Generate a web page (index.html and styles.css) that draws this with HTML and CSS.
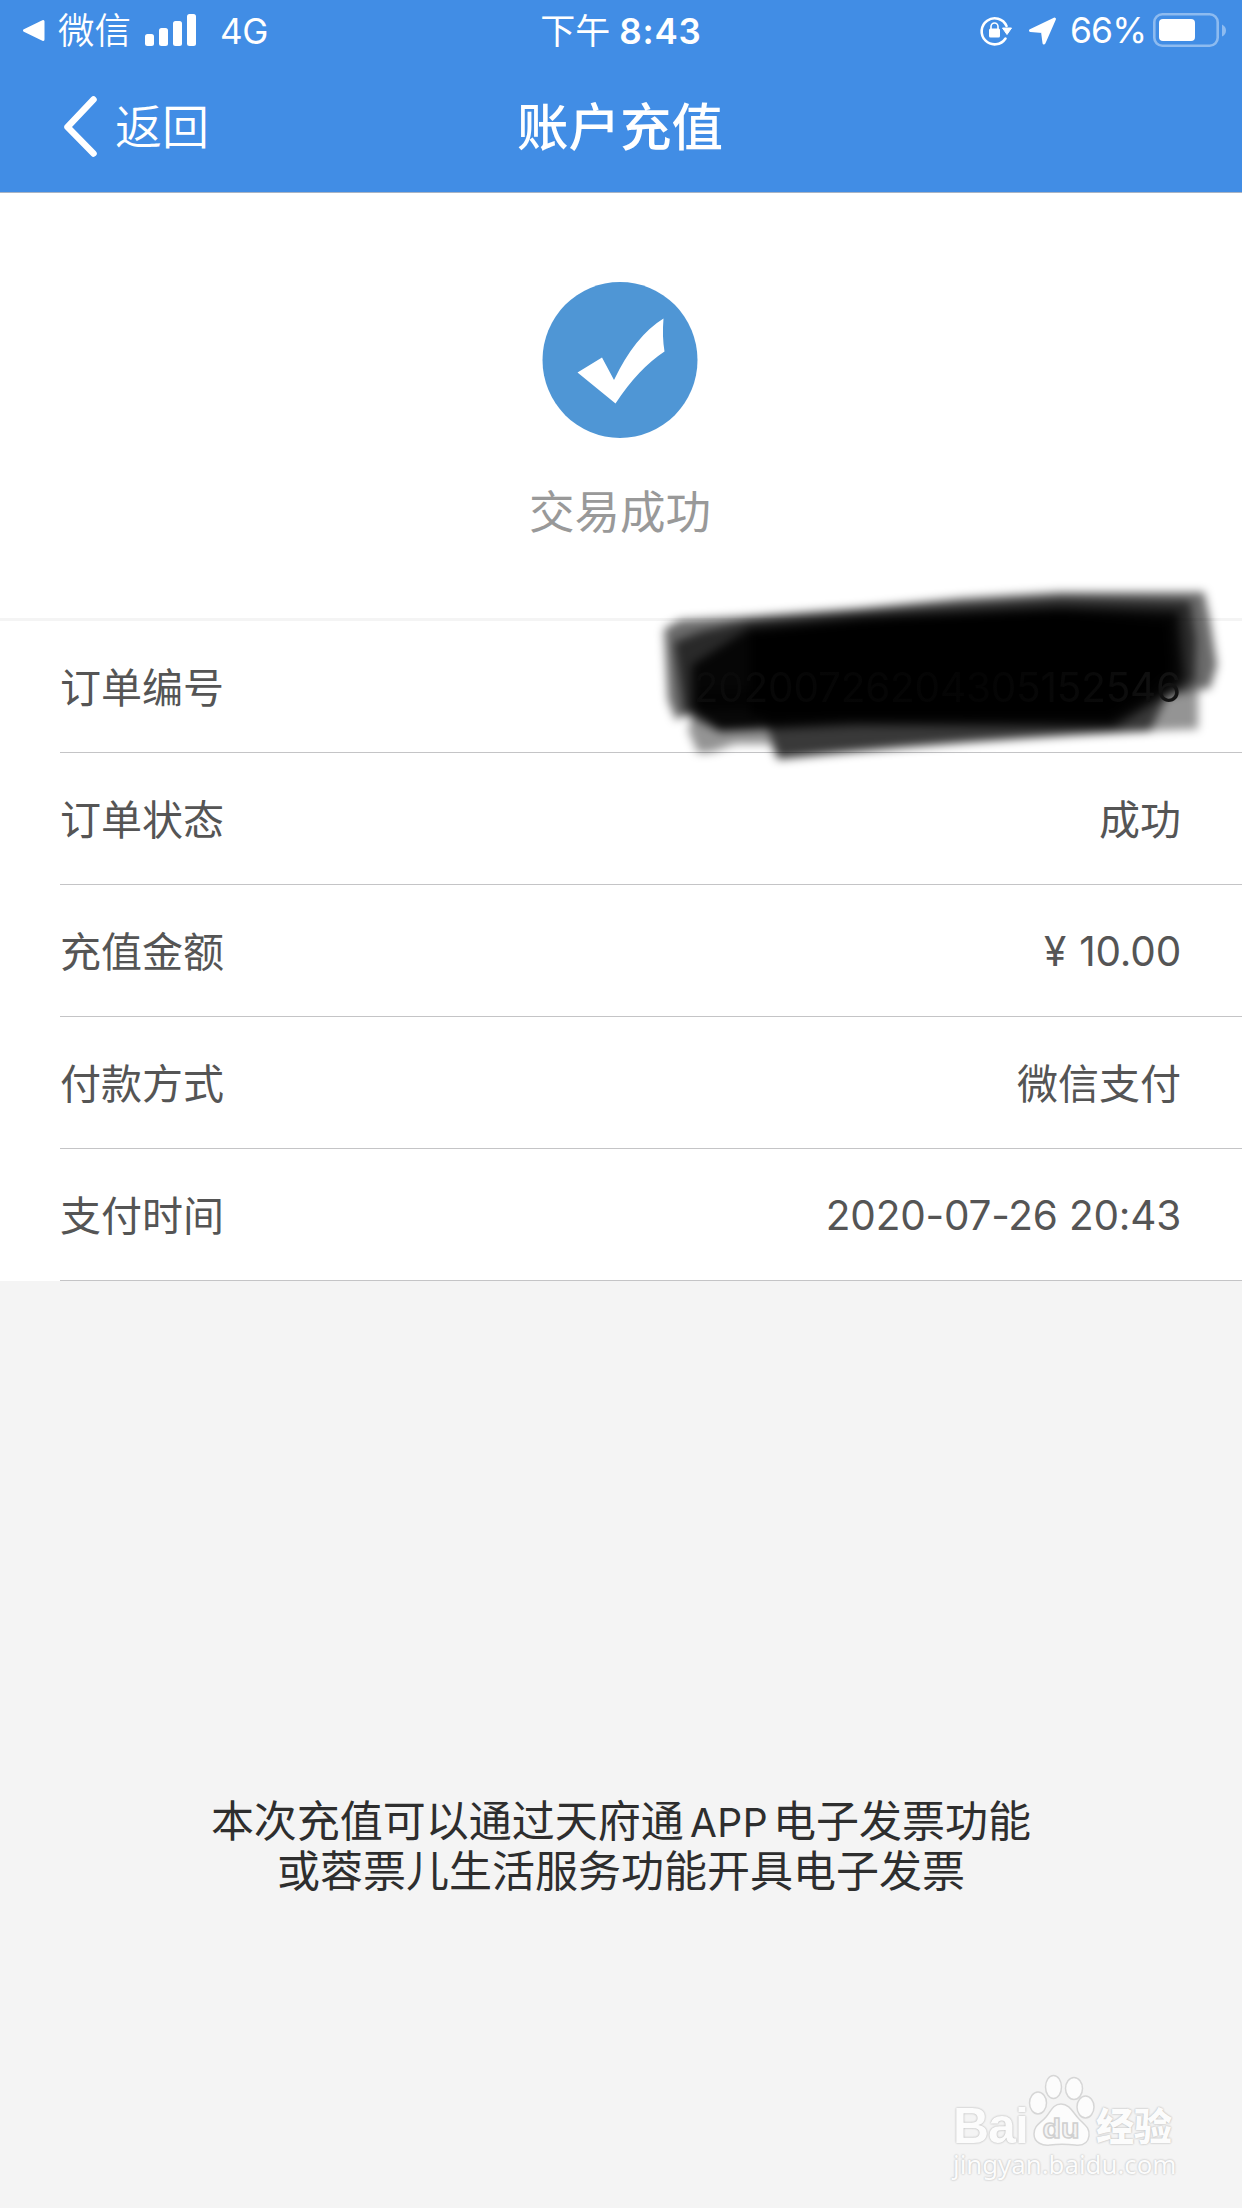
FILE: index.html
```html
<!DOCTYPE html>
<html lang="zh-CN">
<head>
<meta charset="utf-8">
<title>账户充值</title>
<link rel="stylesheet" href="styles.css">
</head>
<body>
<div class="screen">
  <header class="top">
    <div class="status">
      <div class="status-left">
        <svg class="tri" width="24" height="24" viewBox="0 0 24 24"><path d="M2.5 11.5 21 2.5v18z" fill="#fff" stroke="#fff" stroke-width="3" stroke-linejoin="round"/></svg>
        <span class="app">微信</span>
        <svg class="signal" width="52" height="34" viewBox="0 0 52 34" fill="#fff"><rect x="0" y="20" width="9" height="12" rx="2.5"/><rect x="14" y="14" width="9" height="18" rx="2.5"/><rect x="28" y="7" width="9" height="25" rx="2.5"/><rect x="42" y="0" width="9" height="32" rx="2.5"/></svg>
        <span class="net">4G</span>
      </div>
      <div class="clock"><span class="ampm">下午</span><span class="time">8:43</span></div>
      <div class="status-right">
        <svg class="lock" width="34" height="32" viewBox="0 0 34 32"><path d="M26.500 23.500A13 13 0 1 1 27.500 11" fill="none" stroke="#fff" stroke-width="2.600" stroke-linecap="round"/><path d="M23.500 13h9L28 19.500z" fill="#fff" stroke="#fff" stroke-linejoin="round"/><rect x="10" y="13.500" width="11" height="9" rx="1.500" fill="#fff"/><path d="M12 14v-2.500a3.500 3.500 0 0 1 7 0V14" fill="none" stroke="#fff" stroke-width="1.600"/></svg>
        <svg class="arrow" width="29" height="29" viewBox="0 0 29 29"><path d="M26.500 2 2.500 13.500 14.500 14.500 16 26z" fill="#fff" stroke="#fff" stroke-width="3" stroke-linejoin="round"/></svg>
        <span class="pct">66%</span>
        <svg class="battery" width="74" height="36" viewBox="0 0 74 36"><rect x="1.300" y="1.300" width="63.400" height="31.400" rx="8" fill="none" stroke="#8dbbf0" stroke-width="2.600"/><rect x="6" y="6" width="36" height="22" rx="4" fill="#fff"/><path d="M69 11.500q4 2 4 6t-4 6z" fill="#8dbbf0"/></svg>
      </div>
    </div>
    <nav class="nav">
      <div class="back">
        <svg width="34" height="62" viewBox="0 0 34 62"><path d="M29.500 3.500 3.500 31l26 26.500" fill="none" stroke="#fff" stroke-width="6.500" stroke-linecap="round" stroke-linejoin="round"/></svg>
        <span class="back-text">返回</span>
      </div>
      <h1 class="title">账户充值</h1>
      <div></div>
    </nav>
  </header>
  <section class="result">
    <svg class="badge" width="156" height="156" viewBox="0 0 156 156"><ellipse cx="78" cy="78" rx="77.500" ry="78" fill="#4f96d5"/><path d="M35.500 90.500 60 75.500 72 98Q93 54 121.500 36.500 120 54 122.500 69.500 96 87 73.500 121.500z" fill="#fff"/></svg>
    <p class="result-text">交易成功</p>
  </section>
  <dl class="details">
    <div class="row"><dt>订单编号</dt><dd class="num">
      <svg class="scribble" width="600" height="220" viewBox="650 570 600 220">
        <defs><filter id="soft" x="-10%" y="-20%" width="120%" height="140%"><feGaussianBlur stdDeviation="5"/></filter></defs>
        <g filter="url(#soft)">
          <path d="M688 730 698 753 712 752 735 744 770 744 778 760 Q960 740 1170 730L1198 729 1198 690 1150 680 700 690z" opacity=".42"/>
          <path d="M763 715 778 758 Q960 740 1150 731 L1170 690 760 700z" opacity=".62"/>
          <path d="M664 629 680 620 750 616 860 608 960 598 1060 592 1204 592 1210 620 1217 665 1210 688 1170 695 690 712 676 720 668 700z" opacity=".58"/>
          <path d="M674 642 700 632 750 620 860 611 1060 598 1190 601 1196 640 1195 682 1170 694 1115 728 860 726 720 732 684 714z" opacity=".62"/>
          <path d="M692 665 750 628 860 618 1060 608 1178 612 1184 680 1110 724 850 722 720 730 692 710z" opacity=".85"/>
          <path d="M750 634 900 618 1060 612 1168 622 1172 672 1110 715 850 716 750 716z"/>
        </g>
      </svg><span class="order">20200726204305152546</span></dd></div>
    <div class="row"><dt>订单状态</dt><dd class="zh">成功</dd></div>
    <div class="row"><dt>充值金额</dt><dd class="num amount">¥ 10.00</dd></div>
    <div class="row"><dt>付款方式</dt><dd class="zh">微信支付</dd></div>
    <div class="row"><dt>支付时间</dt><dd class="num">2020-07-26 20:43</dd></div>
  </dl>
  <p class="note">本次充值可以通过天府通<span class="latin">APP</span>电子发票功能<br>或蓉票儿生活服务功能开具电子发票</p>
  <footer class="mark">
    <div class="logo">
      <span class="bai">Bai</span>
      <svg class="paw" width="68" height="74" viewBox="0 0 68 74"><g fill="#fcfcfc" stroke="#d6d6d6" stroke-width="1.500"><ellipse cx="10" cy="29" rx="8.500" ry="11"/><ellipse cx="25.500" cy="13" rx="8" ry="11.500"/><ellipse cx="46" cy="14.500" rx="8.500" ry="11"/><ellipse cx="57.500" cy="33" rx="8.500" ry="11"/><path d="M33 30c9 0 12 9 18 15s11 9 10 17c-1 7-6 10-14 9s-18-1-25 0S6 69 6 60s7-11 12-17 7-13 15-13z"/></g><text x="33" y="64" text-anchor="middle" class="du" textLength="37" lengthAdjust="spacingAndGlyphs">du</text></svg>
      <span class="exp">经验</span>
    </div>
    <div class="url">jingyan.baidu.com</div>
  </footer>
</div>
</body>
</html>
```
FILE: styles.css
```css
* { box-sizing: border-box; }
body, h1, p, dl, dd { margin: 0; }
body {
  font-family: Inter, "Noto Sans CJK SC", sans-serif;
  background: #f4f4f4;
}
.screen { width: 1242px; height: 2208px; display: flex; flex-direction: column; overflow: hidden; }
.top { height: 193px; background: #418de5; border-bottom: 1px solid #a9b4c4; color: #fff; }
.status { height: 62px; display: grid; grid-template-columns: 1fr auto 1fr; align-items: center; font-size: 35px; line-height: 62px; }
.status-left { display: flex; align-items: center; padding-left: 22px; }
.app { margin-left: 12px; font-size: 36.5px; font-weight: 350; }
.signal { margin-left: 14px; }
.net { margin-left: 23px; letter-spacing: -.3px; }
.clock { display: flex; align-items: center; gap: 9px; }
.ampm { font-size: 35px; }
.time { font-weight: 600; letter-spacing: .8px; }
.status-right { display: flex; align-items: center; justify-content: flex-end; padding-right: 15px; }
.arrow { margin-left: 15px; }
.pct { margin: 0 7px 0 13px; font-size: 35.5px; letter-spacing: -1px; }
.nav { height: 130px; display: grid; grid-template-columns: 1fr auto 1fr; align-items: center; }
.back { display: flex; align-items: center; gap: 17px; padding-left: 64px; font-size: 47px; font-weight: 350; }
.back-text { padding-bottom: 8px; }
.title { font-size: 51.5px; font-weight: 500; line-height: 60px; margin-right: 2px; padding-bottom: 1px; }
.result { height: 428px; padding-top: 89px; background: #fff; border-bottom: 3px solid #f4f4f4; display: flex; flex-direction: column; align-items: center; }
.badge { margin-right: 2px; }
.result-text { margin-top: 42px; margin-right: 2px; font-size: 45.5px; line-height: 66px; color: #999; }
.details { background: #fff; color: #555; font-size: 41px; }
.row { height: 132px; margin-left: 60px; padding-right: 61px; border-bottom: 1px solid #c4c4c6; display: flex; justify-content: space-between; align-items: center; position: relative; }
dt, .zh { padding-bottom: 4px; }
.num { font-size: 40.5px; letter-spacing: -.2px; padding-top: 2px; }
.amount { word-spacing: 2px; }
.order {
  position: relative;
  letter-spacing: -.2px;
  color: transparent;
  background: linear-gradient(90deg, #0c0c0c, #060606 20%, #040404 60%, #0a0a0a 85%, #141414);
  -webkit-background-clip: text;
  background-clip: text;
}
.scribble { position: absolute; left: 590px; top: -51px; }
.note { margin-top: 515px; text-align: center; font-size: 43px; line-height: 50px; color: #2e2e2e; }
.latin { margin: 0 5px 0 6px; font-size: 39px; letter-spacing: .5px; line-height: 40px; }
.mark { margin: auto 67px 28px auto; color: #fcfcfc; }
.logo { display: flex; align-items: flex-end; }
.bai { width: 75px; font: bold 50px/44px "Liberation Sans", sans-serif; letter-spacing: -1px; text-shadow: 0 0 2px #bbb, 0 0 2px #ccc; }
.du { font: bold 28px "Liberation Sans", sans-serif; fill: #f4f4f4; stroke: #d0d0d0; stroke-width: 1.5px; }
.exp { font-size: 38px; font-weight: 900; line-height: 44px; text-shadow: 0 0 2px #bbb, 0 0 2px #ccc; }
.url { width: 222px; font: 25.8px/32px "Noto Sans", sans-serif; text-shadow: 0 0 2px #c4c4c4, 0 0 2px #ccc; }
```
